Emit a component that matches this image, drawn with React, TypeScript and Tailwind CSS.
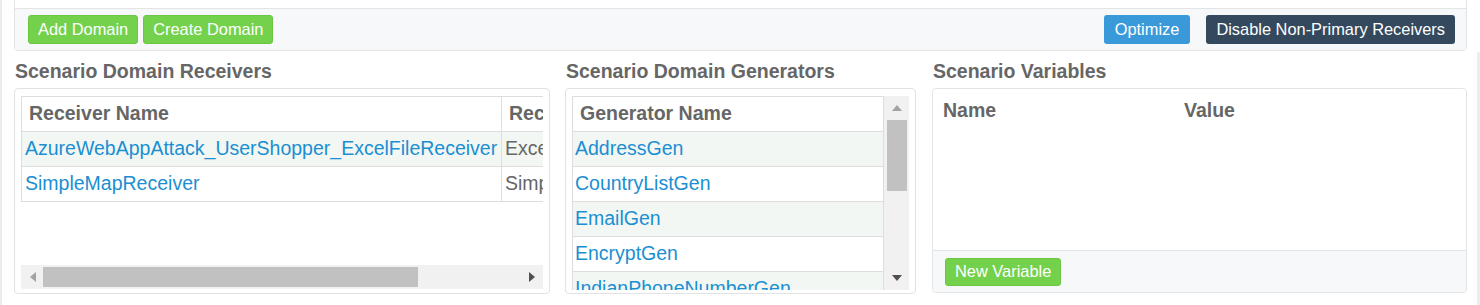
const font = { fontFamily: '"Liberation Sans", Arial, sans-serif' };

const receivers = [
  { name: "AzureWebAppAttack_UserShopper_ExcelFileReceiver", type: "ExcelFileReceiver" },
  { name: "SimpleMapReceiver", type: "SimpleMapReceiver" },
];

const generators = ["AddressGen", "CountryListGen", "EmailGen", "EncryptGen", "IndianPhoneNumberGen"];

const Arrow = ({ dir, dark }: { dir: "left" | "right" | "up" | "down"; dark?: boolean }) => {
  const fill = dark ? "#505050" : "#a3a3a3";
  const pts = {
    left: "6,0 6,10 0,5",
    right: "0,0 0,10 6,5",
    up: "0,6 10,6 5,0",
    down: "0,0 10,0 5,6",
  }[dir];
  const vertical = dir === "up" || dir === "down";
  return (
    <svg width={vertical ? 10 : 6} height={vertical ? 6 : 10} viewBox={vertical ? "0 0 10 6" : "0 0 6 10"}>
      <polygon points={pts} fill={fill} />
    </svg>
  );
};

const Btn = ({ label, color, h = "h-[29px]" }: { label: string; color: string; h?: string }) => (
  <button className={`${h} ${color} rounded-[3px] text-white text-[16.4px] leading-none`}>{label}</button>
);

export default function App() {
  return (
    <div className="flex w-[1480px] h-[305px] bg-white overflow-hidden" style={font}>
      <div className="w-[2px] bg-[#ececec]" />

      <div className="w-[1465px] pl-[12px]">
        {/* toolbar card */}
        <div className="border-x border-b border-[#e2e4e6] rounded-b-[4px]">
          <div className="h-[9px] border-b border-[#e2e4e6] bg-white" />
          <div className="h-[41px] bg-[#f7f8f9] flex items-center justify-between pl-[13px] pr-[11px]">
            <div className="flex gap-[5px]">
              <Btn label="Add Domain" color="px-[9px] bg-[#74d14c] border border-[#6bc644]" />
              <Btn label="Create Domain" color="px-[9px] bg-[#74d14c] border border-[#6bc644]" />
            </div>
            <div className="flex gap-[16px]">
              <Btn label="Optimize" color="px-[11px] bg-[#3a9ad9]" />
              <Btn label="Disable Non-Primary Receivers" color="px-[10px] bg-[#34495e]" />
            </div>
          </div>
        </div>

        <div className="flex pt-[4px]">
          {/* receivers */}
          <div className="w-[536px]">
            <div className="h-[33px] flex items-center pl-[1px] text-[19.5px] font-bold text-[#666]">
              Scenario Domain Receivers
            </div>
            <div className="h-[206px] border border-[#e2e2e2] rounded-[4px] px-[6px] pt-[7px]">
              <div className="w-[522px] h-[193px] flex flex-col">
                <div className="flex-1 overflow-hidden">
                  <table className="border-collapse w-[523px] table-fixed text-[19.5px]">
                    <colgroup>
                      <col className="w-[480px]" />
                      <col className="w-[43px]" />
                    </colgroup>
                    <thead>
                      <tr className="h-[35px]">
                        <th className="border border-[#dddddd] text-left pl-[7px] font-bold text-[#666] whitespace-nowrap overflow-hidden">Receiver Name</th>
                        <th className="border border-[#dddddd] text-left pl-[7px] font-bold text-[#666] whitespace-nowrap overflow-hidden">Receiver Type</th>
                      </tr>
                    </thead>
                    <tbody>
                      {receivers.map((r, i) => (
                        <tr key={r.name} className={`h-[35px] ${i % 2 === 0 ? "bg-[#f2f7f4]" : "bg-white"}`}>
                          <td className="border border-[#dddddd] pl-[3px] text-[#1b8fd2] whitespace-nowrap overflow-hidden">{r.name}</td>
                          <td className="border border-[#dddddd] pl-[3px] text-[#666] whitespace-nowrap overflow-hidden">{r.type}</td>
                        </tr>
                      ))}
                    </tbody>
                  </table>
                </div>
                <div className="h-[24px] bg-[#f1f1f1] flex items-center">
                  <div className="w-[22px] flex justify-center pl-[2px]">
                    <Arrow dir="left" />
                  </div>
                  <div className="w-[375px] h-[20px] bg-[#c1c1c1]" />
                  <div className="flex-1" />
                  <div className="w-[22px] flex justify-center">
                    <Arrow dir="right" dark />
                  </div>
                </div>
              </div>
            </div>
          </div>

          {/* generators */}
          <div className="w-[351px] ml-[15px]">
            <div className="h-[33px] flex items-center pl-[1px] text-[19.5px] font-bold text-[#666]">
              Scenario Domain Generators
            </div>
            <div className="h-[206px] border border-[#e2e2e2] rounded-[4px] px-[6px] pt-[7px]">
              <div className="h-[194px] flex">
                <div className="w-[312px] overflow-hidden">
                  <table className="border-collapse w-[312px] text-[19.5px]">
                    <thead>
                      <tr className="h-[35px]">
                        <th className="border border-[#dddddd] text-left pl-[7px] font-bold text-[#666]">Generator Name</th>
                      </tr>
                    </thead>
                    <tbody>
                      {generators.map((g, i) => (
                        <tr key={g} className={`h-[35px] ${i % 2 === 0 ? "bg-[#f2f7f4]" : "bg-white"}`}>
                          <td className="border border-[#dddddd] pl-[2px] text-[#1b8fd2] whitespace-nowrap">{g}</td>
                        </tr>
                      ))}
                    </tbody>
                  </table>
                </div>
                <div className="w-[25px] bg-[#f1f1f1] flex flex-col items-center">
                  <div className="h-[24px] flex items-center">
                    <Arrow dir="up" />
                  </div>
                  <div className="w-[20px] h-[71px] bg-[#c1c1c1]" />
                  <div className="flex-1" />
                  <div className="h-[24px] flex items-center">
                    <Arrow dir="down" dark />
                  </div>
                </div>
              </div>
            </div>
          </div>

          {/* variables */}
          <div className="w-[536px] ml-[16px]">
            <div className="h-[33px] flex items-center pl-[1px] text-[19.5px] font-bold text-[#666]">
              Scenario Variables
            </div>
            <div className="h-[205px] border border-[#e2e4e6] rounded-[4px] flex flex-col">
              <div className="flex-1 bg-white rounded-t-[4px]">
                <div className="h-[44px] flex items-center pl-[10px] text-[19.5px] font-bold text-[#666]">
                  <div className="w-[241px]">Name</div>
                  <div>Value</div>
                </div>
              </div>
              <div className="h-[42px] border-t border-[#e2e4e6] bg-[#f7f8fa] rounded-b-[4px] flex items-center px-[12px]">
                <Btn label="New Variable" color="px-[9px] bg-[#74d14c] border border-[#6bc644]" h="h-[28px]" />
              </div>
            </div>
          </div>
        </div>
      </div>

      <div className="flex-1" />
      <div className="w-[3px] mt-[52px] bg-[#ededed]" />
    </div>
  );
}
